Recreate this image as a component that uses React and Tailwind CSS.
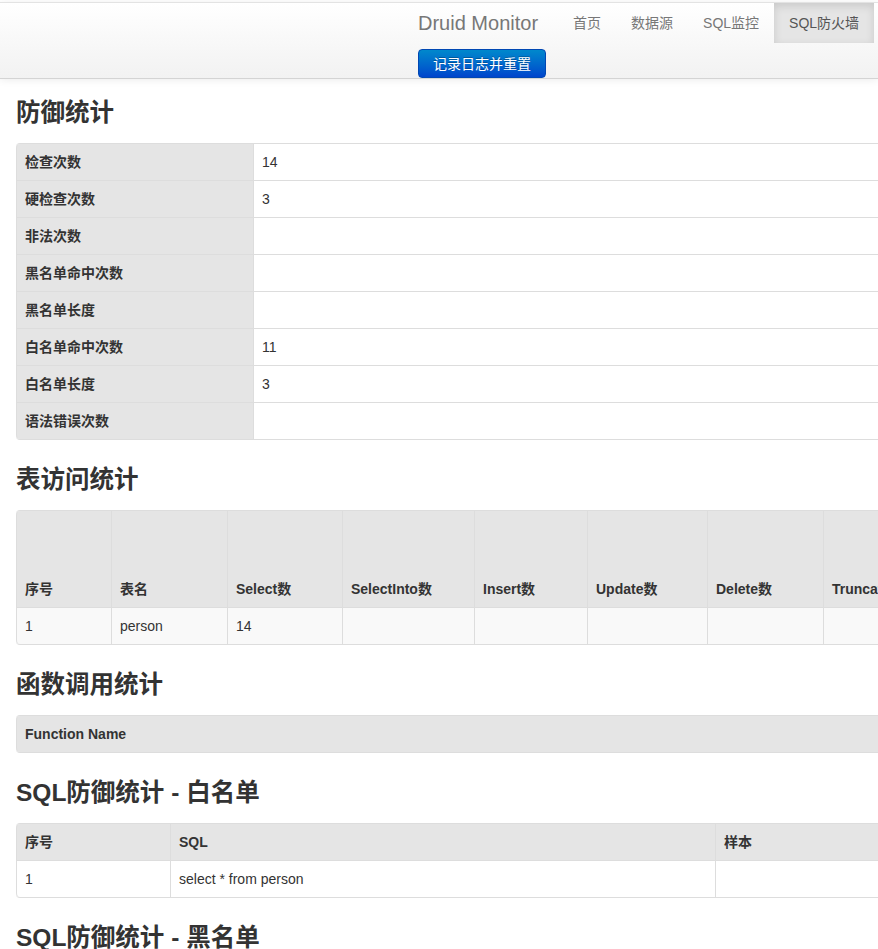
import React from "react";

const cellBase = "border-l border-t border-[#dddddd] px-2 py-2 leading-5 text-left";

function H3({ children }) {
  return (
    <h3 className="text-[24.5px] font-bold leading-[40px] text-[#333333] mb-[10px]">{children}</h3>
  );
}

function StatTable() {
  const rows = [
    ["检查次数", "14"],
    ["硬检查次数", "3"],
    ["非法次数", ""],
    ["黑名单命中次数", ""],
    ["黑名单长度", ""],
    ["白名单命中次数", "11"],
    ["白名单长度", "3"],
    ["语法错误次数", ""],
  ];
  return (
    <table className="w-[1100px] border-separate border-spacing-0 border-y border-r border-[#dddddd] rounded-[4px] mb-[20px] text-[14px]">
      <tbody>
        {rows.map(([k, v], i) => (
          <tr key={k}>
            <th
              className={`${cellBase} w-[237px] bg-[#e5e5e5] font-bold ${i === 0 ? "border-t-0 rounded-tl-[4px]" : ""} ${i === rows.length - 1 ? "rounded-bl-[4px]" : ""}`}
            >
              {k}
            </th>
            <td className={`${cellBase} bg-white ${i === 0 ? "border-t-0" : ""}`}>{v}</td>
          </tr>
        ))}
      </tbody>
    </table>
  );
}

function AccessTable() {
  const cols = [
    ["序号", "w-[95px]"],
    ["表名", "w-[116px]"],
    ["Select数", "w-[115px]"],
    ["SelectInto数", "w-[132px]"],
    ["Insert数", "w-[113px]"],
    ["Update数", "w-[120px]"],
    ["Delete数", "w-[116px]"],
    ["Truncate数", "w-[116px]"],
    ["Create数", "w-[116px]"],
  ];
  const vals = ["1", "person", "14", "", "", "", "", "", ""];
  return (
    <table className="w-[1040px] table-fixed border-separate border-spacing-0 border-y border-r border-[#dddddd] rounded-[4px] mb-[20px] text-[14px]">
      <colgroup>
        {cols.map(([c, w]) => (
          <col key={c} className={w} />
        ))}
      </colgroup>
      <thead>
        <tr className="h-[96px]">
          {cols.map(([c], i) => (
            <th
              key={c}
              className={`${cellBase} border-t-0 bg-[#e5e5e5] font-bold align-bottom whitespace-nowrap overflow-hidden ${i === 0 ? "rounded-tl-[4px]" : ""}`}
            >
              {c}
            </th>
          ))}
        </tr>
      </thead>
      <tbody>
        <tr>
          {vals.map((v, i) => (
            <td key={i} className={`${cellBase} bg-[#f9f9f9] ${i === 0 ? "rounded-bl-[4px]" : ""}`}>
              {v}
            </td>
          ))}
        </tr>
      </tbody>
    </table>
  );
}

function FunctionTable() {
  return (
    <table className="w-[1100px] border-separate border-spacing-0 border-y border-r border-[#dddddd] rounded-[4px] mb-[20px] text-[14px]">
      <thead>
        <tr>
          <th className={`${cellBase} border-t-0 bg-[#e5e5e5] font-bold rounded-l-[4px]`}>Function Name</th>
        </tr>
      </thead>
    </table>
  );
}

function ListTable({ rows }) {
  return (
    <table className="w-[1100px] table-fixed border-separate border-spacing-0 border-y border-r border-[#dddddd] rounded-[4px] mb-[20px] text-[14px]">
      <colgroup>
        <col className="w-[154px]" />
        <col className="w-[545px]" />
        <col />
      </colgroup>
      <thead>
        <tr>
          <th className={`${cellBase} border-t-0 bg-[#e5e5e5] font-bold rounded-tl-[4px]`}>序号</th>
          <th className={`${cellBase} border-t-0 bg-[#e5e5e5] font-bold`}>SQL</th>
          <th className={`${cellBase} border-t-0 bg-[#e5e5e5] font-bold`}>样本</th>
        </tr>
      </thead>
      <tbody>
        {rows.map((r, i) => (
          <tr key={i}>
            <td className={`${cellBase} bg-white ${i === rows.length - 1 ? "rounded-bl-[4px]" : ""}`}>{r[0]}</td>
            <td className={`${cellBase} bg-white`}>{r[1]}</td>
            <td className={`${cellBase} bg-white`}>{r[2]}</td>
          </tr>
        ))}
      </tbody>
    </table>
  );
}

export default function App() {
  const navItems = ["首页", "数据源", "SQL监控", "SQL防火墙"];
  return (
    <div className="w-full min-h-screen overflow-hidden bg-white text-[#333333] text-[14px] font-['Liberation_Sans','Noto_Sans_CJK_SC',sans-serif]">
      <div className="mt-[2px] border-t border-t-[#e3e3e3] border-b border-b-[#d4d4d4] bg-linear-to-b from-white to-[#f2f2f2] shadow-[0_1px_8px_rgba(0,0,0,0.08)] mb-[14px]">
        <div className="ml-[398px] w-[480px] flex flex-col">
          <div className="flex h-[40px] items-stretch">
            <div className="px-[20px] py-[10px] text-[20px] leading-5 text-[#777777] whitespace-nowrap">Druid Monitor</div>
            <ul className="flex items-stretch">
              {navItems.map((n, i) => {
                const active = i === navItems.length - 1;
                return (
                  <li
                    key={n}
                    className={`px-[15px] py-[10px] leading-5 whitespace-nowrap ${active ? "bg-[#e5e5e5] text-[#555555] shadow-[inset_0_3px_8px_rgba(0,0,0,0.125)]" : "text-[#777777]"}`}
                  >
                    {n}
                  </li>
                );
              })}
            </ul>
          </div>
          <div className="pl-[20px] pt-[6px]">
            <button className="h-[29px] px-[14px] leading-5 text-[14px] text-white rounded-[4px] border border-[#0047b3] bg-linear-to-b from-[#0088cc] to-[#0044cc] [text-shadow:0_-1px_0_rgba(0,0,0,0.25)]">
              记录日志并重置
            </button>
          </div>
        </div>
      </div>

      <div className="pl-[16px]">
        <H3>防御统计</H3>
        <StatTable />

        <H3>表访问统计</H3>
        <AccessTable />

        <H3>函数调用统计</H3>
        <FunctionTable />

        <H3>SQL防御统计 - 白名单</H3>
        <ListTable rows={[["1", "select * from person", ""]]} />

        <H3>SQL防御统计 - 黑名单</H3>
        <ListTable rows={[]} />
      </div>
    </div>
  );
}
